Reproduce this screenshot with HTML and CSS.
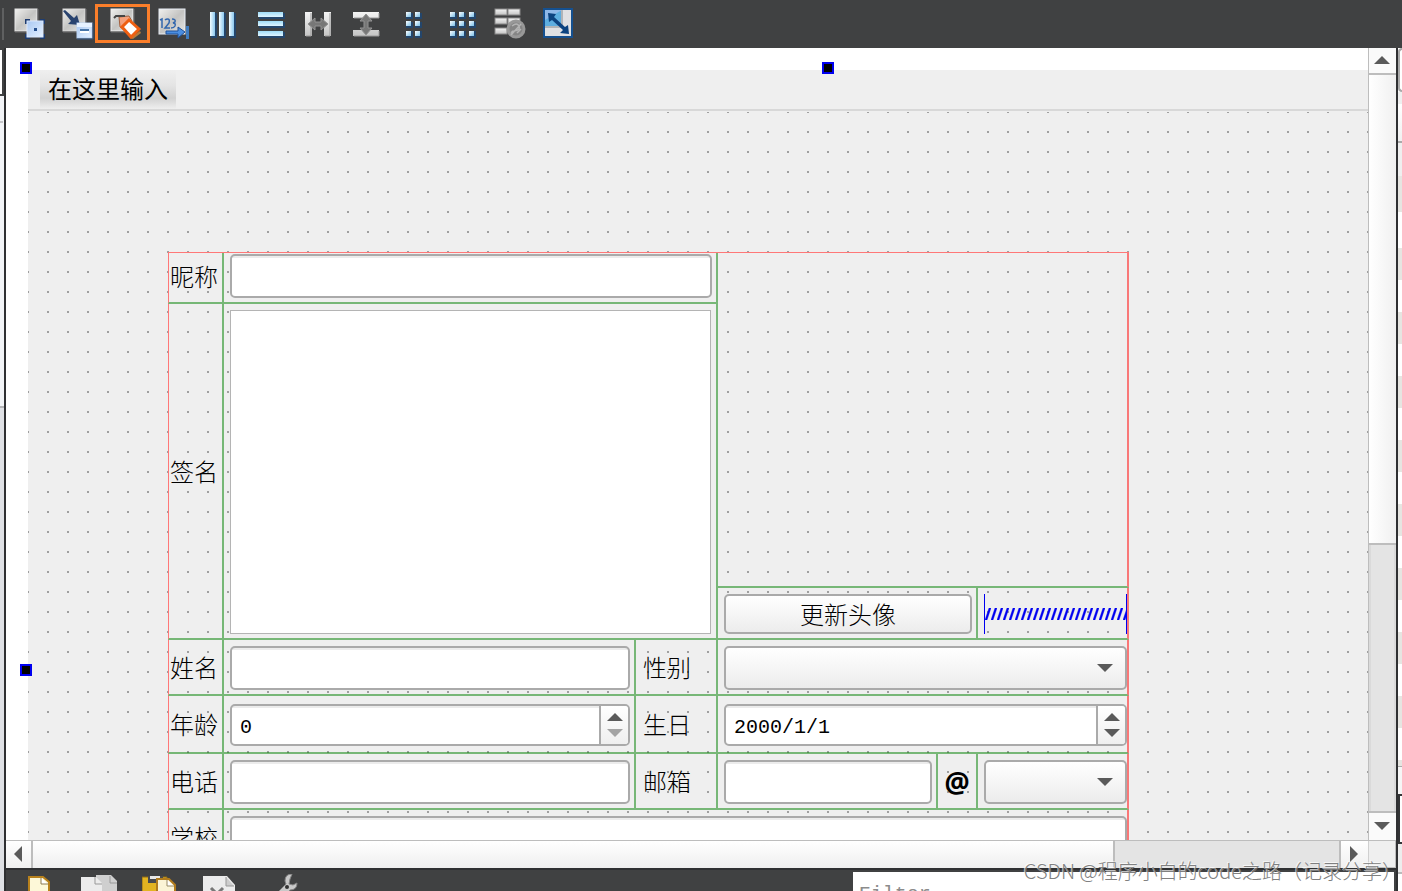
FILE: index.html
```html
<!DOCTYPE html>
<html lang="zh-CN">
<head>
<meta charset="utf-8">
<title>Form designer</title>
<link rel="stylesheet" href="styles.css">
</head>
<body>
<svg class="defs" aria-hidden="true">
  <defs>
    <linearGradient id="paper" x1="0" y1="0" x2="1" y2="1"><stop offset="0" stop-color="#f0f0ee"/><stop offset=".5" stop-color="#c4c4c2"/><stop offset="1" stop-color="#e6e6e4"/></linearGradient>
    <linearGradient id="sky" x1="0" y1="0" x2="1" y2="1"><stop offset="0" stop-color="#a9c8f2"/><stop offset="1" stop-color="#e6f1ff"/></linearGradient>
    <linearGradient id="barV" x1="0" y1="0" x2="1" y2="0"><stop offset="0" stop-color="#f2fcff"/><stop offset="1" stop-color="#8cc8ee"/></linearGradient>
    <linearGradient id="barH" x1="0" y1="0" x2="0" y2="1"><stop offset="0" stop-color="#9fdcf8"/><stop offset="1" stop-color="#dff4ff"/></linearGradient>
    <linearGradient id="cell" x1="0" y1="0" x2="1" y2="1"><stop offset="0" stop-color="#ffffff"/><stop offset="1" stop-color="#79bfe8"/></linearGradient>
    <linearGradient id="silver" x1="0" y1="0" x2="0" y2="1"><stop offset="0" stop-color="#f4f4f4"/><stop offset="1" stop-color="#c4c4c4"/></linearGradient>
    <pattern id="slashes" y="14" width="6" height="12" patternUnits="userSpaceOnUse"><path d="M0 12h2L6 0H4z" fill="#0000f0" stroke="#0000f0" stroke-width=".4"/></pattern>
  </defs>
</svg>

<header class="toolbar">
  <span class="grip"></span>
  <button class="tool" aria-label="Edit widgets"><svg viewBox="0 0 32 32"><rect x="1" y="1" width="22" height="22" fill="url(#paper)" stroke="#e8e8e8"/><path d="M1 24h23V1" fill="none" stroke="#707070"/><path d="M11 11h5v5h-5zM26 11h5v5h-5zM11 26h5v5h-5zM26 26h5v5h-5z" fill="#1d3c70"/><rect x="13" y="13" width="16" height="16" fill="url(#sky)" stroke="#dbe8fb"/><path d="M20 20h3v3h-3z" fill="#27508e"/></svg></button>
  <button class="tool" aria-label="Edit signals"><svg viewBox="0 0 32 32"><rect x="1" y="1" width="22" height="22" fill="url(#paper)" stroke="#d8d8d8"/><path d="M1 24h23V1" fill="none" stroke="#707070"/><path d="M1 3l2-1 9 8 3-3 3 10-12-1 3-3z" fill="#29436f"/><rect x="15" y="15" width="15" height="15" fill="url(#sky)" stroke="#b9d3f5"/><path d="M15 31h16V15" fill="none" stroke="#35557f"/><rect x="15" y="15" width="15" height="4" fill="#e6f1ff"/><rect x="18" y="21" width="9" height="2" fill="#4674a8"/><rect x="18" y="23" width="9" height="2" fill="#fff"/></svg></button>
  <button class="tool tool-active" aria-label="Edit buddies"><svg viewBox="0 0 32 32"><rect x="1" y="1" width="22" height="22" fill="url(#paper)" stroke="#eeeeee"/><path d="M1 24h23V1" fill="none" stroke="#707070"/><path d="M9 9l10-1 3 5-9 8-3-2z" fill="#f3a07c" stroke="#a0603f"/><path d="M4 10l2-2h9" stroke="#454545" stroke-width="2" fill="none"/><path d="M20 30l10-7 1 2-8 6z" fill="#b37c3c"/><path d="M19 12l10 9-8 8-9-10z" fill="#fff" stroke="#ee5f12" stroke-width="3"/></svg></button>
  <button class="tool" aria-label="Edit tab order"><svg viewBox="0 0 32 32"><rect x="1" y="1" width="26" height="25" fill="url(#paper)" stroke="#e8eef6"/><path d="M2 12l2-1v9M7 12q1-1 3-1t1 4l-4 5h5M14 11q4 0 3 3l-2 1q3 0 2 3-1 2-4 2" fill="none" stroke="#3267ad" stroke-width="1.5"/><path d="M8 23h12v-4l7 5-7 6v-4H8z" fill="#4b8ee0" stroke="#1e5098"/><path d="M28 18h3v13h-3z" fill="#3f7cc0"/></svg></button>
  <button class="tool" aria-label="Lay out horizontally"><svg viewBox="0 0 32 32"><path d="M5 29h5V5M14 29h5V5M24 29h5V5" fill="none" stroke="#24466c" stroke-width="2"/><path d="M4 4h5v24H4z" fill="url(#barV)"/><path d="M13 4h5v24h-5z" fill="url(#barV)"/><path d="M23 4h5v24h-5z" fill="url(#barV)"/></svg></button>
  <button class="tool" aria-label="Lay out vertically"><svg viewBox="0 0 32 32"><path d="M5 10h25V5M5 19h25v-5M5 29h25v-5" fill="none" stroke="#24466c" stroke-width="2"/><rect x="4" y="4" width="25" height="5" fill="url(#barH)"/><rect x="4" y="13" width="25" height="5" fill="url(#barH)"/><rect x="4" y="23" width="25" height="5" fill="url(#barH)"/></svg></button>
  <button class="tool" aria-label="Horizontal splitter"><svg viewBox="0 0 32 32"><path d="M3 4h7v24H3zM22 4h7v24h-7z" fill="url(#silver)"/><path d="M9 5v23H4M28 5v23h-5" fill="none" stroke="#999"/><path d="M6 16l7-6v4h6v-4l7 6-7 6v-4h-6v4z" fill="#777" stroke="#939393"/></svg></button>
  <button class="tool" aria-label="Vertical splitter"><svg viewBox="0 0 32 32"><path d="M3 4h26v6H3zM3 22h26v6H3z" fill="url(#silver)"/><path d="M4 10h25V5M4 28h25v-5" fill="none" stroke="#999"/><path d="M16 6l6 7h-4v7h4l-6 7-6-7h4v-7h-4z" fill="#777" stroke="#939393"/></svg></button>
  <button class="tool" aria-label="Form layout"><svg viewBox="0 0 32 32"><path fill="#24466c" d="M8 5h7v6H8zM17 5h7v6h-7zM8 14h7v6H8zM17 14h7v6h-7zM8 23h7v7H8zM17 23h7v7h-7z"/><g fill="url(#cell)"><rect x="8" y="4" width="5" height="5"/><rect x="17" y="4" width="5" height="5"/><rect x="8" y="13" width="5" height="5"/><rect x="17" y="13" width="5" height="5"/><rect x="8" y="23" width="5" height="5"/><rect x="17" y="23" width="5" height="5"/></g></svg></button>
  <button class="tool" aria-label="Grid layout"><svg viewBox="0 0 32 32"><path fill="#24466c" d="M4 5h7v6H4zM13 5h7v6h-7zM23 5h7v6h-7zM4 14h7v6H4zM13 14h7v6h-7zM23 14h7v6h-7zM4 23h7v7H4zM13 23h7v7h-7zM23 23h7v7h-7z"/><g fill="url(#cell)"><rect x="4" y="4" width="5" height="5"/><rect x="13" y="4" width="5" height="5"/><rect x="23" y="4" width="5" height="5"/><rect x="4" y="13" width="5" height="5"/><rect x="13" y="13" width="5" height="5"/><rect x="23" y="13" width="5" height="5"/><rect x="4" y="23" width="5" height="5"/><rect x="13" y="23" width="5" height="5"/><rect x="23" y="23" width="5" height="5"/></g></svg></button>
  <button class="tool" aria-label="Break layout"><svg viewBox="0 0 32 32"><g fill="url(#silver)" stroke="#8a8a8a"><rect x="1" y="1" width="12" height="6"/><rect x="14" y="1" width="12" height="6"/><rect x="1" y="10" width="12" height="6"/><rect x="14" y="10" width="12" height="6"/><rect x="1" y="20" width="12" height="6"/></g><circle cx="22" cy="21" r="8" fill="#858585" stroke="#989898" stroke-width="3"/><path d="M17 27l10-11M18 18q5-4 7 0t-5 5q-3 0-2 3M27 21l-4 4" stroke="#b4b4b4" stroke-width="1.5" fill="none"/></svg></button>
  <button class="tool" aria-label="Adjust size"><svg viewBox="0 0 32 32"><rect x="2" y="1" width="28" height="28" fill="#e0e1e3" stroke="#15508f" stroke-width="2"/><rect x="3" y="2" width="17" height="17" fill="#5eaee0"/><path d="M3 2h17L3 12z" fill="#8fb8e8"/><path d="M20 2v17H3" fill="none" stroke="#b0b4b8" stroke-width="2"/><path d="M6 5l8 1-2 3 11 10 3-2 1 9-9-1 3-3L10 12l-3 2z" fill="#0c4380"/></svg></button>
</header>

<div class="workspace">
  <aside class="side side-left"><span class="left-frame"></span><span class="left-panel"></span><span class="left-track"></span></aside>

  <div class="center">
    <main class="editor">
      <section class="canvas">
        <i class="handle handle-nw"></i><i class="handle handle-n"></i><i class="handle handle-w"></i>
        <div class="form-window">
          <nav class="menubar"><button class="menu-entry">在这里输入</button></nav>
          <form class="surface">
            <div class="layout">
              <div class="cell c1 first"><label for="nick">昵称</label></div>
              <div class="cell nick"><input id="nick" class="field"></div>
              <div class="cell avatar"></div>
              <div class="cell c1 sign-label"><label for="sign">签名</label></div>
              <div class="cell sign"><textarea id="sign" class="area"></textarea></div>
              <div class="cell update"><button type="button" class="push">更新头像</button></div>
              <div class="cell end c6"><svg class="spacer" aria-hidden="true"><rect y="14" width="100%" height="12" fill="url(#slashes)"/></svg></div>

              <div class="cell c1"><label for="name">姓名</label></div>
              <div class="cell"><input id="name" class="field"></div>
              <div class="cell caption"><label for="sex">性别</label></div>
              <div class="cell end span3"><span class="combo"><select id="sex"></select></span></div>

              <div class="cell c1"><label for="age">年龄</label></div>
              <div class="cell low"><span class="spin"><input id="age" value="0"><span class="steps"><button type="button" class="up" aria-label="Increase age"></button><button type="button" class="down dim" aria-label="Decrease age"></button></span></span></div>
              <div class="cell caption"><label for="birth">生日</label></div>
              <div class="cell low end span3"><span class="spin"><input id="birth" value="2000/1/1"><span class="steps"><button type="button" class="up" aria-label="Next date"></button><button type="button" class="down" aria-label="Previous date"></button></span></span></div>

              <div class="cell c1"><label for="phone">电话</label></div>
              <div class="cell"><input id="phone" class="field"></div>
              <div class="cell caption"><label for="mail">邮箱</label></div>
              <div class="cell"><input id="mail" class="field"></div>
              <div class="cell at"><label for="domain">@</label></div>
              <div class="cell end"><span class="combo"><select id="domain"></select></span></div>

              <div class="cell c1"><label for="school">学校</label></div>
              <div class="cell end span5"><input id="school" class="field"></div>
            </div>
          </form>
        </div>
      </section>
      <div class="vbar"><button class="vbtn up" aria-label="Scroll up"></button><span class="vthumb"></span><span class="vtrack"></span><button class="vbtn vbtn-end down" aria-label="Scroll down"></button></div>
    </main>
    <div class="hbar"><button class="hbtn left" aria-label="Scroll left"></button><span class="hthumb"></span><span class="htrack"></span><button class="hbtn hbtn-end right" aria-label="Scroll right"></button><span class="corner"></span></div>
    <footer class="bottom">
      <div class="actions">
        <button class="act" aria-label="New"><svg viewBox="0 0 40 32"><path d="M9 3h14l6 5v24H9z" fill="#fdf8d8" stroke="#b8811c" stroke-width="2"/><path d="M21 4v6h7" fill="#fff" stroke="#8c7a50"/></svg></button>
        <button class="act" aria-label="Copy"><svg viewBox="0 0 40 32"><path d="M15 1h15l6 6v25H15z" fill="#cfcfcf"/><path d="M0 3h15l6 6v23H0z" fill="#ececec"/><path d="M14 3v7h7M29 2v7h7" fill="none" stroke="#999"/></svg></button>
        <button class="act" aria-label="Paste"><svg viewBox="0 0 40 32"><path d="M0 3h25v29H0z" fill="#e3b421" stroke="#8d6817"/><path d="M6 2h15v7H6z" fill="#4a4b4d"/><path d="M8 2h10v3H8z" fill="#e8e8e8"/><path d="M15 5h12l6 6v21H15z" fill="#fbf4d6" stroke="#b07b1d" stroke-width="2"/><path d="M25 6v6h7" fill="#fff" stroke="#9a8c66"/></svg></button>
        <button class="act" aria-label="Delete"><svg viewBox="0 0 40 32"><path d="M0 2h24l8 9v21H0z" fill="#ececec"/><path d="M23 3v9h8" fill="#ccc" stroke="#999"/><path d="M8 14l12 12M20 14L8 26" stroke="#777" stroke-width="3"/></svg></button>
        <button class="act" aria-label="Configure"><svg viewBox="0 0 40 32"><path d="M28 0q-7 0-7 7l1 3L5 27l5 5 16-16q7 0 7-7l-4 2-4-1 1-5z" fill="#c9c9c9" stroke="#858585"/><circle cx="23" cy="13" r="2" fill="#333"/></svg></button>
      </div>
      <input class="filter" placeholder="Filter" aria-label="Filter">
    </footer>
  </div>

  <aside class="side side-right"><span class="r-box"></span><span class="r-head"></span><span class="r-gap"></span><span class="r-first"></span><span class="r-white"></span><span class="r-rows"></span><span class="r-foot"></span><span class="r-dark"></span><span class="r-light"></span><span class="r-rest"></span></aside>
</div>
<p class="watermark">CSDN @程序小白的code之路（记录分享）</p>
</body>
</html>
```

FILE: styles.css
```css
* { box-sizing: border-box; }
body {
  margin: 0;
  height: 100vh;
  display: flex;
  flex-direction: column;
  overflow: hidden;
  background: #404142;
  color: #000;
  font-family: "Noto Sans CJK SC", sans-serif;
  font-size: 24px;
}
button, input, select, textarea {
  margin: 0;
  padding: 0;
  border: 0;
  border-radius: 0;
  background: none;
  color: inherit;
  font: inherit;
  outline: 0;
}
.defs { position: absolute; width: 0; height: 0; }

/* Top toolbar */
.toolbar {
  flex: none;
  display: flex;
  gap: 16px;
  height: 48px;
  padding: 8px 2px;
  background: #404142;
}
.grip { width: 2px; height: 32px; margin-right: -6px; background: #5f6061; }
.tool { position: relative; flex: none; width: 32px; height: 32px; }
.tool svg, .act svg { display: block; width: 100%; height: 100%; }
.tool-active::after {
  content: "";
  position: absolute;
  inset: -4px -8px -3px -15px;
  border: 3px solid #fb7e2a;
}

.workspace { flex: 1; min-height: 0; display: flex; }
.center { flex: 1; min-width: 0; display: flex; flex-direction: column; }
.editor { flex: 1; min-height: 0; display: flex; }

/* Neighbouring panels */
.side { flex: none; width: 6px; display: flex; flex-direction: column; }
.side-left { border-right: 2px solid #2f3032; background: #dfe1e5; }
.left-frame { height: 48px; border: solid #404142; border-width: 2px 2px 2px 0; background: #fff; }
.left-panel { height: 312px; border-bottom: 2px solid #b4b5b8; background: linear-gradient(#c4c5c8, #c4c5c8) 0 25px / 3px 2px no-repeat #f2f4f7; }
.side-right { border-left: 2px solid #2f3032; background: #fff; }
.r-box { height: 44px; border: 2px solid #aaa; border-right: 0; border-radius: 4px 0 0 4px; background: #fff; }
.r-head { height: 51px; border-top: 12px solid #efefef; border-bottom: 2px solid #aaa; background: linear-gradient(#fff, #f0f0f0); }
.r-gap { height: 33px; background: #efefef; }
.r-first { height: 36px; background: #e6e5e1; }
.r-white { height: 36px; }
.r-rows { height: 518px; background: repeating-linear-gradient(#e6e5e1 0 32px, #fff 32px 64px); }
.r-foot { height: 28px; border-top: 1px solid #aaa; background: #f6f6f6; }
.r-dark { height: 50px; border: 2px solid #333436; border-right: 0; background: #fff; }
.r-light { height: 30px; border-bottom: 2px solid #bbb; background: #ededed; }
.r-rest { flex: 1; }

/* Design canvas */
.canvas {
  position: relative;
  flex: 1;
  min-width: 0;
  display: flex;
  padding: 22px 0 0 22px;
  overflow: hidden;
  background: #fff;
}
.handle {
  position: absolute;
  width: 12px;
  height: 12px;
  border: 2px solid #0000f0;
  background: #000;
  box-shadow: inset -1px -1px #000;
}
.handle-nw { left: 14px; top: 14px; }
.handle-n { left: 816px; top: 14px; }
.handle-w { left: 14px; top: 616px; }
.form-window { flex: 1; min-width: 0; display: flex; flex-direction: column; }
.menubar {
  display: flex;
  flex: none;
  height: 41px;
  padding-left: 12px;
  border-bottom: 2px solid #d8d8d8;
  background: #efefef;
}
.menu-entry { padding: 0 8px 4px; line-height: 34px; background: linear-gradient(#efefef, #e4e4e4 40%, #d2d2d2 72%, #efefef); }
.surface {
  flex: 1;
  padding: 140px 239px 0 140px;
  border-top: 1px solid #efefef;
  background:
    linear-gradient(to right, transparent 2px, #efefef 2px) -1px -1px / 20px 20px,
    linear-gradient(#a0a0a0 2px, transparent 2px) 0 -1px / 20px 20px,
    #efefef;
}

/* Form grid with its guide lines */
.layout {
  display: grid;
  grid-template-columns: 56px 412fr 82px 220fr 40px 151fr;
  grid-template-rows: 51px 284px 52px 56px 58px 56px 56px;
  border-top: 1px solid #ff7878;
  margin-bottom: -100px;
}
.cell {
  min-width: 0;
  display: flex;
  align-items: center;
  padding: 6px 4px 4px 6px;
  border: solid rgba(0, 128, 0, .5);
  border-width: 0 2px 2px 0;
}
.cell label { line-height: 36px; font-weight: 300; white-space: nowrap; }
.c1 { grid-column: 1; padding: 0 0 0 1px; border-left: 1px solid #ff7878; }
.c1.first { padding-bottom: 4px; }
.caption { padding: 0 0 0 7px; }
.end { padding-right: 0; border-right-color: #f97878; }
.low { padding: 8px 4px 6px 6px; }
.low.end { padding-right: 0; }
.nick { grid-column: 2 / 4; padding: 1px 4px 4px 6px; }
.avatar { grid-column: 4 / 7; grid-row: 1 / 3; border-right-color: #f97878; }
.sign-label { grid-row: 2 / 4; }
.sign { grid-column: 2 / 4; grid-row: 2 / 4; padding-right: 5px; }
.update { grid-column: 4 / 6; }
.c6 { grid-column: 6; }
.span3 { grid-column: 4 / 7; }
.span5 { grid-column: 2 / 7; }
.at { padding: 2px 0 0; justify-content: center; }
.cell.at label { font-family: "Noto Sans", sans-serif; font-size: 28px; font-weight: 700; }

.field, .combo, .spin, .push {
  width: 100%;
  height: 100%;
  border: 2px solid #aaa;
  border-radius: 5px;
}
.field, .spin { background: linear-gradient(#ececec 2px, #fff 2px); }
.area { width: 100%; height: 100%; resize: none; border: 1px solid #b4b4b4; background: #fff; }
.push { font-weight: 300; line-height: 34px; background: linear-gradient(#fff, #ececec); }
.combo { position: relative; display: block; background: linear-gradient(#fff, #ececec); }
.combo select { display: block; width: 100%; height: 100%; appearance: none; }
.combo::after {
  content: "";
  position: absolute;
  right: 12px;
  top: calc(50% - 4px);
  border: solid transparent;
  border-width: 8px 8px 0;
  border-top-color: #5a5a5a;
}
.spin { display: flex; overflow: hidden; }
.spin input { flex: 1; min-width: 0; padding: 4px 8px 0; font: 20px "Liberation Mono", monospace; }
.steps {
  flex: none;
  width: 29px;
  display: flex;
  flex-direction: column;
  gap: 8px;
  align-items: center;
  justify-content: center;
  border-left: 2px solid #aaa;
  background: linear-gradient(#fff, #efefef);
}
.up::before, .down::before, .left::before, .right::before { content: ""; display: block; border: solid transparent; }
.up::before { border-width: 0 8px 8px; border-bottom-color: #5a5a5a; }
.down::before { border-width: 8px 8px 0; border-top-color: #5a5a5a; }
.down.dim::before { border-top-color: #a4a4a4; }
.left::before { border-width: 8px 8px 8px 0; border-right-color: #5a5a5a; }
.right::before { border-width: 8px 0 8px 8px; border-left-color: #5a5a5a; }
.spacer { display: block; width: 100%; height: 40px; border: solid #0000f0; border-width: 0 1px; }

/* Scroll bars */
.vbar { flex: none; width: 28px; display: flex; flex-direction: column; border-left: 1px solid #bdbdbd; background: #e4e4e4; }
.vbtn, .hbtn { flex: none; display: flex; align-items: center; justify-content: center; background: #fafafa; }
.vbtn { height: 27px; padding: 0 2px 1px 0; border-bottom: 2px solid #bdbdbd; }
.vbtn-end { height: 29px; padding-bottom: 2px; border: solid #bdbdbd; border-width: 2px 0 0; }
.vthumb { flex: 469; border-bottom: 2px solid #bdbdbd; background: linear-gradient(to right, #fff, #f0f0f0); }
.vtrack { flex: 267; border: solid #dadada; border-width: 0 2px; }
.hbar { flex: none; height: 28px; display: flex; border-top: 1px solid #bdbdbd; background: #e4e4e4; }
.hbtn { width: 27px; padding: 0 2px 2px 0; border-right: 2px solid #bdbdbd; background: linear-gradient(#fff, #f0f0f0); }
.hbtn-end { width: 30px; border-left: 2px solid #bdbdbd; border-right: 1px solid #d0d0d0; }
.hthumb { flex: 1082; border-right: 2px solid #bdbdbd; background: linear-gradient(#fff, #efefef); }
.htrack { flex: 224; }
.corner { width: 27px; background: #efefef; border: solid #bdbdbd; border-width: 0 1px 1px 0; }

/* Bottom tool strip */
.bottom {
  flex: none;
  height: 23px;
  display: flex;
  justify-content: space-between;
  overflow: hidden;
  padding-right: 2px;
  border-top: 2px solid #2f3032;
  background: #404142;
}
.actions { display: flex; gap: 21px; padding: 4px 14px; }
.act { flex: none; width: 40px; height: 32px; }
.filter { flex: none; width: 39%; height: 44px; margin-top: 2px; padding: 0 6px; background: #fff; font: 20px "Liberation Mono", monospace; }
.filter::placeholder { color: #8c8c8c; opacity: 1; }

.watermark {
  position: absolute;
  right: 0;
  bottom: 6px;
  margin: 0;
  font-size: 20px;
  font-weight: 300;
  line-height: 28px;
  white-space: nowrap;
  color: #808080;
  text-shadow: -1px -1px rgba(255, 255, 255, .7);
}
```
